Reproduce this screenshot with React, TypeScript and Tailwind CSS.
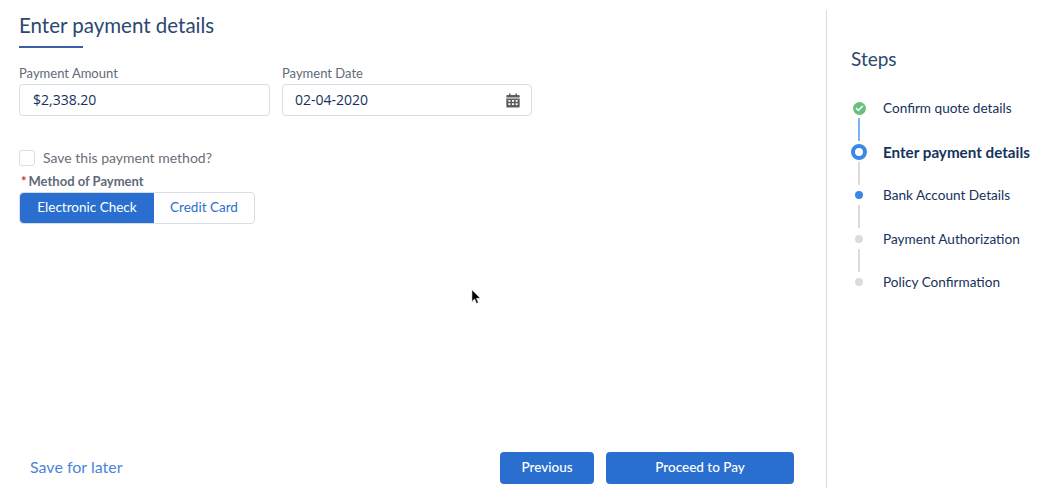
import { Check } from 'lucide-react';

const font = { fontFamily: 'Lato, sans-serif' };

const steps = [
  { label: 'Confirm quote details', state: 'done' },
  { label: 'Enter payment details', state: 'current' },
  { label: 'Bank Account Details', state: 'next' },
  { label: 'Payment Authorization', state: 'todo' },
  { label: 'Policy Confirmation', state: 'todo' },
];

function StepDot({ state }: { state: string }) {
  if (state === 'done') {
    return (
      <span className="flex h-[13px] w-[13px] items-center justify-center rounded-full bg-[#6bc07f]">
        <Check className="h-[9px] w-[9px] text-white" strokeWidth={4} />
      </span>
    );
  }
  if (state === 'current') {
    return <span className="h-4 w-4 rounded-full border-[4px] border-[#3b86e6] bg-white" />;
  }
  if (state === 'next') {
    return <span className="h-2 w-2 rounded-full bg-[#3b86e6]" />;
  }
  return <span className="h-2 w-2 rounded-full bg-[#dddbda]" />;
}

function CalendarIcon() {
  return (
    <svg viewBox="0 0 14 14" className="h-[15px] w-[14px] fill-[#5e5e5e]">
      <path d="M3 0h1.5v1.5h5V0H11v1.5h1.6c.6 0 1.1.5 1.1 1.1V4H.3V2.6c0-.6.5-1.1 1.1-1.1H3z" />
      <path
        fillRule="evenodd"
        d="M.3 5h13.4v7.9c0 .6-.5 1.1-1.1 1.1H1.4c-.6 0-1.1-.5-1.1-1.1zM2.4 6.6v1.6h2V6.6zm3.6 0v1.6h2V6.6zm3.6 0v1.6h2V6.6zM2.4 9.8v1.6h2V9.8zm3.6 0v1.6h2V9.8zm3.6 0v1.6h2V9.8z"
      />
    </svg>
  );
}

export default function App() {
  return (
    <div className="relative flex h-[499px] w-[1054px] overflow-hidden bg-white text-[#16325c]" style={font}>
      <main className="mt-[10px] flex h-[478px] w-[827px] shrink-0 flex-col border-r border-[#dddbda] pl-[19px] pr-[32px]">
        <h1 className="text-[20.5px] leading-[31px] text-[#2b4870]">Enter payment details</h1>
        <div className="mt-[5px] h-[2px] w-[64px] bg-[#3a5fa8]" />

        <div className="mt-[16px] flex gap-3">
          <label className="w-[251px]">
            <span className="block text-[13px] leading-[18px] text-[#606a78]">Payment Amount</span>
            <div className="mt-[2px] flex h-8 items-center rounded border border-[#d8dde6] pb-[2px] pl-[13px] font-['Open_Sans',sans-serif] text-[14px]">
              $2,338.20
            </div>
          </label>
          <label className="w-[250px]">
            <span className="block text-[13px] leading-[18px] text-[#606a78]">Payment Date</span>
            <div className="mt-[2px] flex h-8 items-center justify-between rounded border border-[#d8dde6] pl-[12px] pr-[11px] font-['Open_Sans',sans-serif] text-[14px]">
              <span className="mb-[2px]">02-04-2020</span>
              <CalendarIcon />
            </div>
          </label>
        </div>

        <div className="mt-[34px] flex h-4 items-center gap-[8px]">
          <span className="h-4 w-4 rounded-[3px] border border-[#d8dde6]" />
          <span className="text-[14px] leading-[16px] text-[#6a6f78]">Save this payment method?</span>
        </div>

        <div className="mt-[6px] pl-[2px] text-[13px] font-bold leading-[18px] text-[#606a78]">
          <span className="mr-[2px] text-[#c23934]">*</span>Method of Payment
        </div>

        <div className="mt-[2px] flex h-8 w-[236px] rounded border border-[#d8dde6] text-[13.5px]">
          <div className="flex w-[134px] items-center justify-center rounded-l bg-[#2a6fcf] pb-px text-white">Electronic Check</div>
          <div className="flex flex-1 items-center justify-center pb-px text-[#2a6fcf]">Credit Card</div>
        </div>

        <div className="mb-[4px] mt-auto flex items-center justify-between">
          <a className="pb-[2px] pl-[11px] text-[16px] text-[#4a86d8]">Save for later</a>
          <div className="flex gap-3">
            <button className="h-8 w-[94px] rounded bg-[#2a6fcf] pb-[2px] text-[13.5px] font-medium text-white">Previous</button>
            <button className="h-8 w-[188px] rounded bg-[#2a6fcf] pb-[2px] text-[13.5px] font-medium text-white">Proceed to Pay</button>
          </div>
        </div>
      </main>

      <aside className="pl-[24px] pt-[46px]">
        <h2 className="text-[19px] leading-[26px] text-[#2b4870]">Steps</h2>
        <ol className="mt-[28px]">
          {steps.map((s, i) => (
            <li key={s.label} className="flex h-[43.5px] gap-[16px]">
              <div className="flex w-4 flex-col items-center">
                <div className="flex h-4 items-center justify-center">
                  <StepDot state={s.state} />
                </div>
                {i < steps.length - 1 && (
                  <span className={`mt-[2px] h-[23px] w-[2px] ${i === 0 ? 'bg-[#75b4f5]' : 'bg-[#dddbda]'}`} />
                )}
              </div>
              <span
                className={`whitespace-nowrap leading-[16px] ${s.state === 'current' ? 'text-[15.2px] font-bold' : 'text-[13.6px]'}`}
              >
                {s.label}
              </span>
            </li>
          ))}
        </ol>
      </aside>

      {/* mouse pointer */}
      <svg viewBox="0 0 12 18" className="absolute left-[471px] top-[289px] h-[17px] w-[11px]">
        <path d="M1 0.5v13l3-3 2 5 2-1-2-4.6h4.2z" fill="#000" stroke="#fff" strokeWidth="0.6" />
      </svg>
    </div>
  );
}
